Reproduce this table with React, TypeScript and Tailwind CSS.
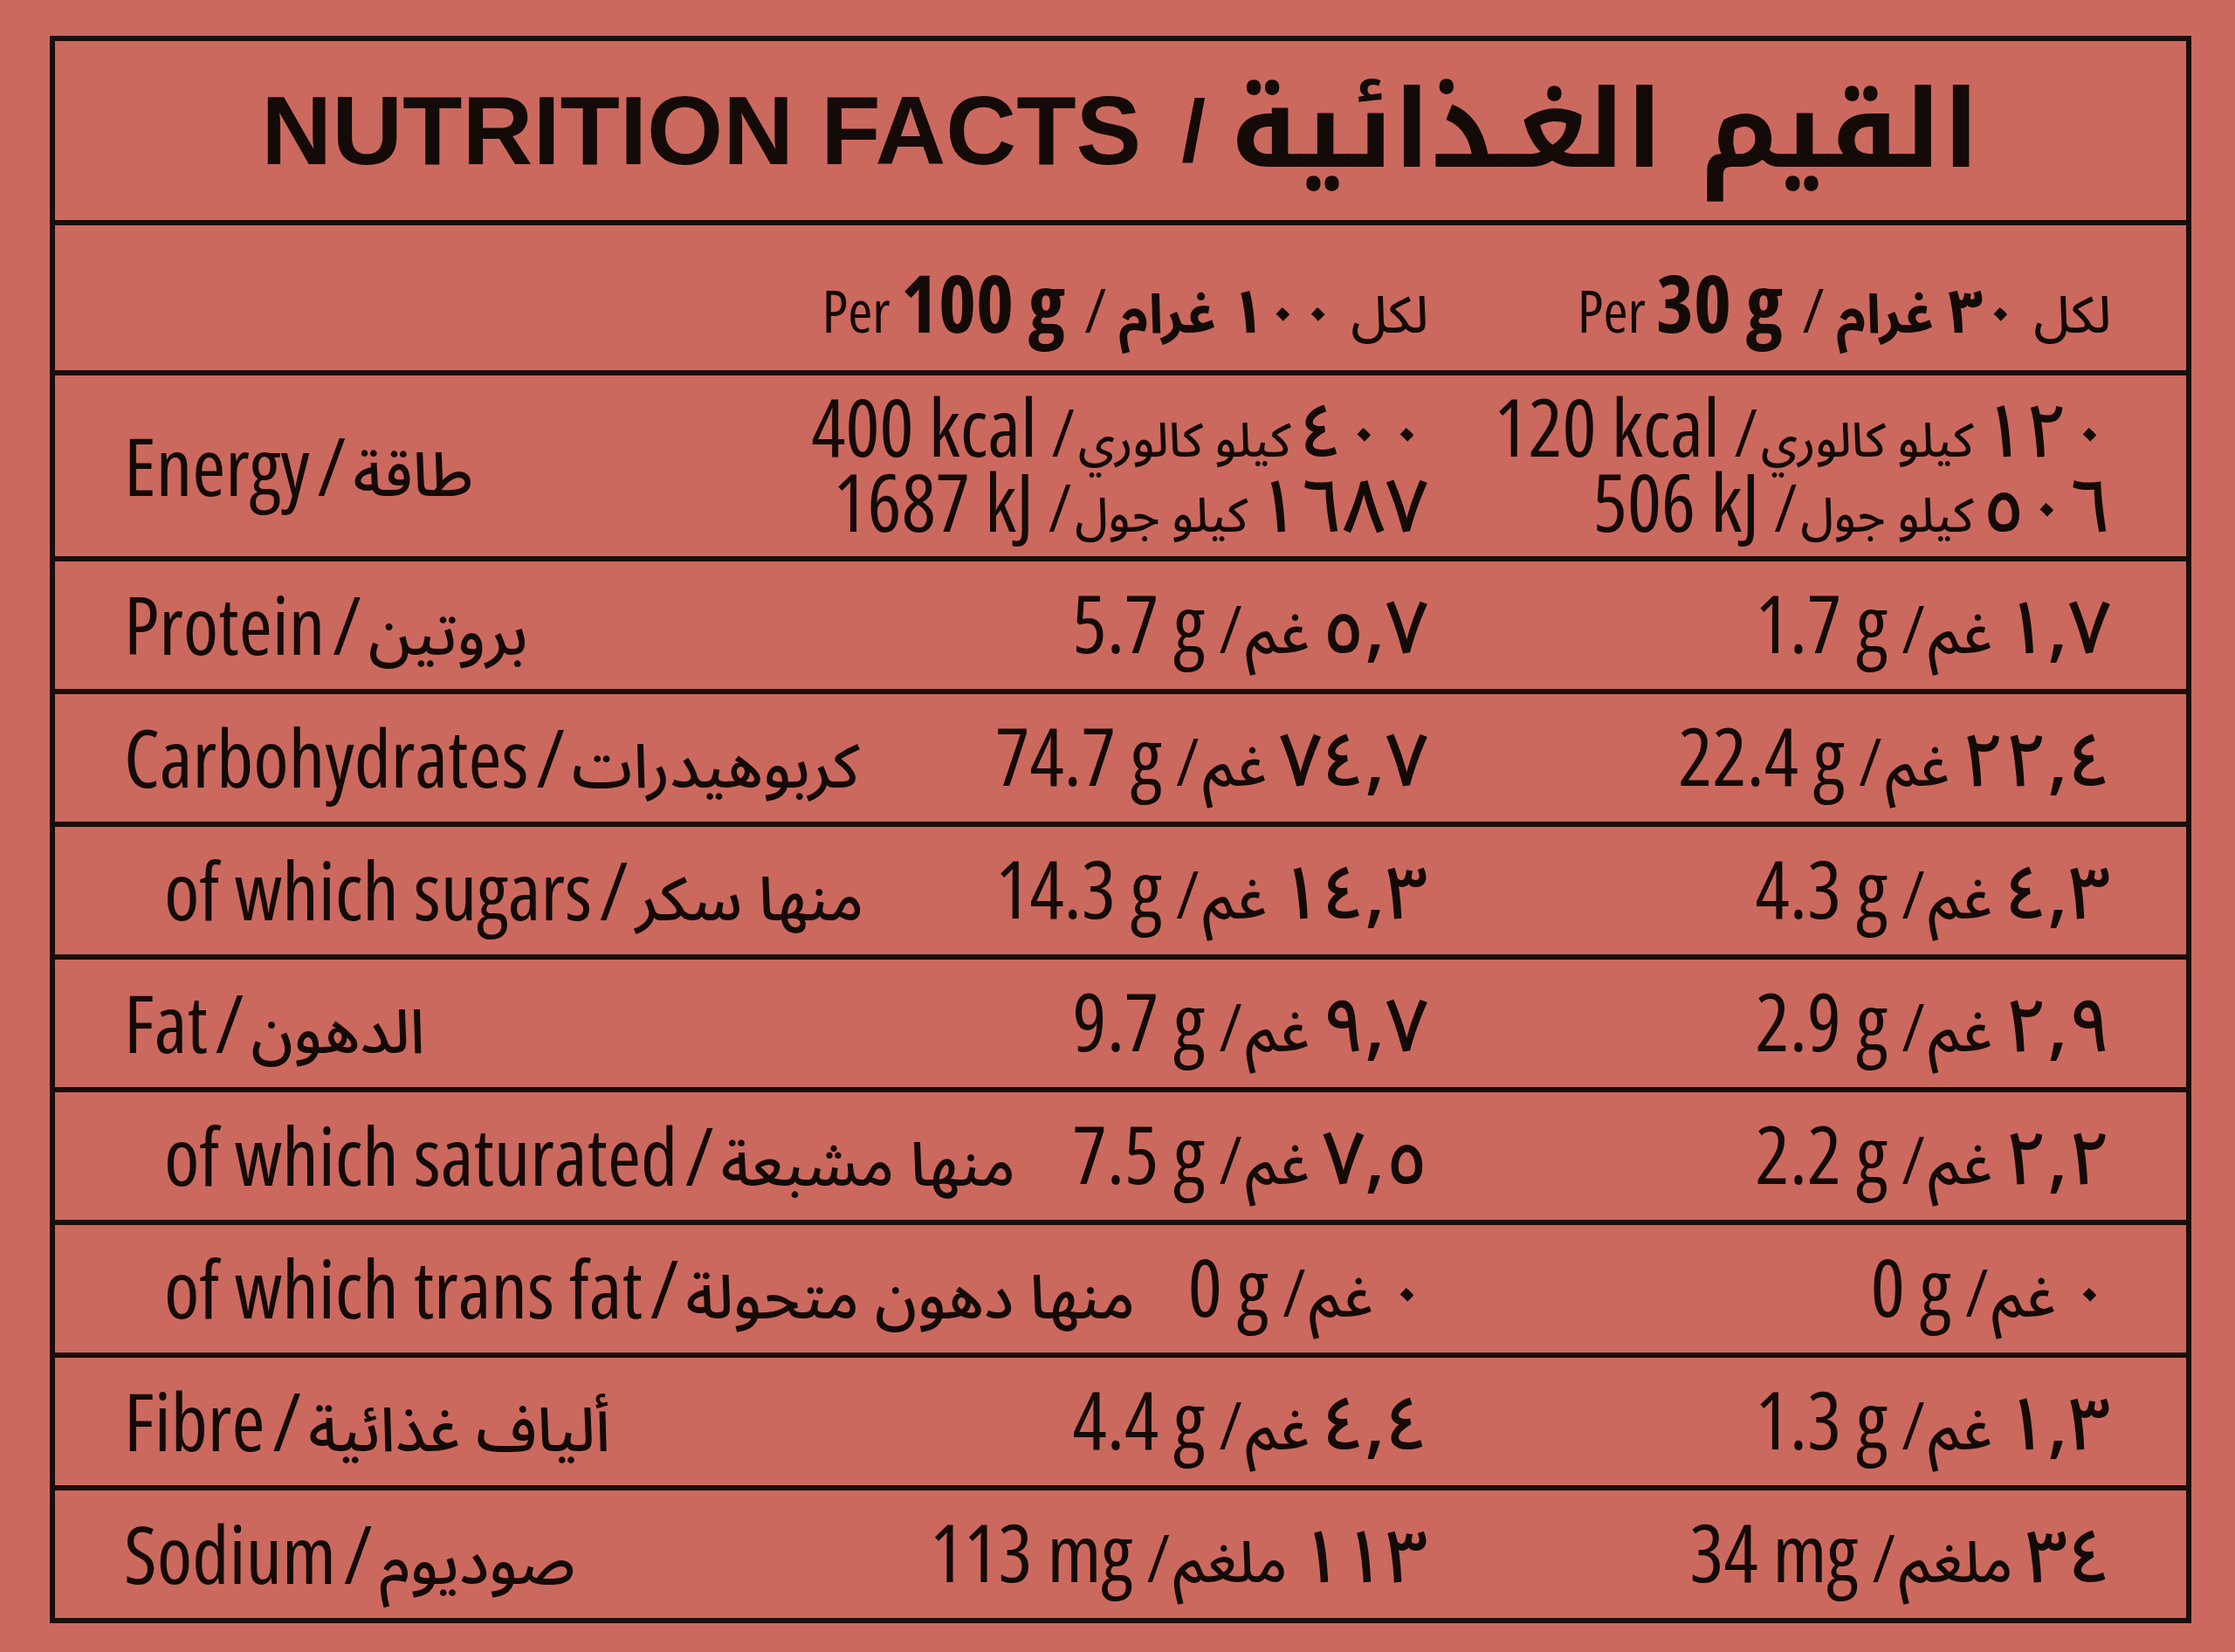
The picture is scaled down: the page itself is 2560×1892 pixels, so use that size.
import React from 'react';

const latin = "font-['Open_Sans','Liberation_Sans',sans-serif] [font-stretch:75%] font-medium";
const arabic = "font-['Noto_Sans_Arabic','DejaVu_Sans',sans-serif] font-medium";
const line = 'border-[#1a0d0a]';

type Amount = [string, string, string];
type Row = { en: string; ar: string; indent?: boolean; a: Amount; b: Amount };

const rows: Row[] = [
  { en: 'Protein', ar: 'بروتين', a: ['5.7 g', '٥,٧', 'غم'], b: ['1.7 g', '١,٧', 'غم'] },
  { en: 'Carbohydrates', ar: 'كربوهيدرات', a: ['74.7 g', '٧٤,٧', 'غم'], b: ['22.4 g', '٢٢,٤', 'غم'] },
  { en: 'of which sugars', ar: 'منها سكر', indent: true, a: ['14.3 g', '١٤,٣', 'غم'], b: ['4.3 g', '٤,٣', 'غم'] },
  { en: 'Fat', ar: 'الدهون', a: ['9.7 g', '٩,٧', 'غم'], b: ['2.9 g', '٢,٩', 'غم'] },
  { en: 'of which saturated', ar: 'منها مشبعة', indent: true, a: ['7.5 g', '٧,٥', 'غم'], b: ['2.2 g', '٢,٢', 'غم'] },
  { en: 'of which trans fat', ar: 'منها دهون متحولة', indent: true, a: ['0 g', '٠', 'غم'], b: ['0 g', '٠', 'غم'] },
  { en: 'Fibre', ar: 'ألياف غذائية', a: ['4.4 g', '٤,٤', 'غم'], b: ['1.3 g', '١,٣', 'غم'] },
  { en: 'Sodium', ar: 'صوديوم', a: ['113 mg', '١١٣', 'ملغم'], b: ['34 mg', '٣٤', 'ملغم'] },
];

const Value = ({ v, unitSize = 'text-[66px]', gap = 'mr-[14px]' }: { v: Amount; unitSize?: string; gap?: string }) => (
  <div className="flex items-baseline justify-end whitespace-nowrap">
    <span className={latin}>{v[0]}</span>
    <span className={`${latin} ml-[16px] mr-[4px] text-[74px]`}>/</span>
    <bdi dir="rtl" className={arabic}>
      <span className="text-[86px]">{v[1]}</span>
      <span className={`${unitSize} ${gap}`}>{v[2]}</span>
    </bdi>
  </div>
);

const Label = ({ en, ar, indent }: { en: string; ar: string; indent?: boolean }) => (
  <div className={`flex min-w-0 flex-1 items-baseline whitespace-nowrap ${indent ? 'pl-[46px]' : ''}`}>
    <span className={latin}>{en}</span>
    <span className={`${latin} ml-[8px] mr-[8px]`}>/</span>
    <bdi dir="rtl" className={`${arabic} text-[70px]`}>{ar}</bdi>
  </div>
);

const PerHeader = ({ en, num }: { en: string; num: string }) => (
  <div className="flex items-baseline justify-end whitespace-nowrap">
    <span className={`${latin} text-[68px]`}>Per</span>
    <span className={`${latin} ml-[12px] text-[92px] !font-bold`}>{en}</span>
    <span className={`${latin} ml-[22px] mr-[14px] text-[70px]`}>/</span>
    <bdi dir="rtl" className={arabic}>
      <span className="text-[58px]">لكل</span>
      <span className="mr-[18px] text-[70px] !font-bold">{num}</span>
      <span className="mr-[16px] text-[62px] !font-bold">غرام</span>
    </bdi>
  </div>
);

const Energy = ({ kcal, kj }: { kcal: Amount; kj: Amount }) => (
  <div className="flex flex-col">
    <Value v={kcal} unitSize="text-[54px]" gap="mr-[10px]" />
    <div className="-mt-[12px]">
      <Value v={kj} unitSize="text-[54px]" gap="mr-[10px]" />
    </div>
  </div>
);

export default function App() {
  return (
    <div className="w-[2560px] h-[1892px] bg-[#cc695e] pt-[41px] pl-[57px] text-[#140a08]">
      <div className={`w-[2453px] border-[6px] ${line}`}>
        <div className={`h-[211px] border-b-[6px] ${line} flex items-center justify-center whitespace-nowrap leading-none`}>
          <span className="font-['Liberation_Sans',sans-serif] font-bold text-[112px]">NUTRITION FACTS</span>
          <span className="font-['Liberation_Sans',sans-serif] font-bold text-[100px] ml-[46px] mr-[28px]">/</span>
          <bdi dir="rtl" className="font-['Noto_Kufi_Arabic','Noto_Sans_Arabic',sans-serif] font-bold text-[124px]">
            القيم الغـذائية
          </bdi>
        </div>

        <div className={`h-[172px] border-b-[6px] ${line} flex items-center pl-[79px] pr-[86px] pt-[12px] leading-none`}>
          <div className="min-w-0 flex-1" />
          <div className="w-[560px] shrink-0">
            <PerHeader en="100 g" num="١٠٠" />
          </div>
          <div className="w-[782px] shrink-0">
            <PerHeader en="30 g" num="٣٠" />
          </div>
        </div>

        <div className={`h-[213px] border-b-[6px] ${line} flex items-center pl-[79px] pr-[86px] text-[92px] leading-none`}>
          <Label en="Energy" ar="طاقة" />
          <div className="w-[560px] shrink-0">
            <Energy kcal={['400 kcal', '٤٠٠', 'كيلو كالوري']} kj={['1687 kJ', '١٦٨٧', 'كيلو جول']} />
          </div>
          <div className="w-[782px] shrink-0">
            <Energy kcal={['120 kcal', '١٢٠', 'كيلو كالوري']} kj={['506 kJ', '٥٠٦', 'كيلو جول']} />
          </div>
        </div>

        {rows.map((r, i) => (
          <div
            key={r.en}
            className={`flex items-center pl-[79px] pr-[86px] text-[92px] leading-none ${
              i < rows.length - 1 ? `h-[152px] border-b-[6px] ${line}` : 'h-[146px]'
            }`}
          >
            <Label en={r.en} ar={r.ar} indent={r.indent} />
            <div className="w-[560px] shrink-0">
              <Value v={r.a} />
            </div>
            <div className="w-[782px] shrink-0">
              <Value v={r.b} />
            </div>
          </div>
        ))}
      </div>
    </div>
  );
}
